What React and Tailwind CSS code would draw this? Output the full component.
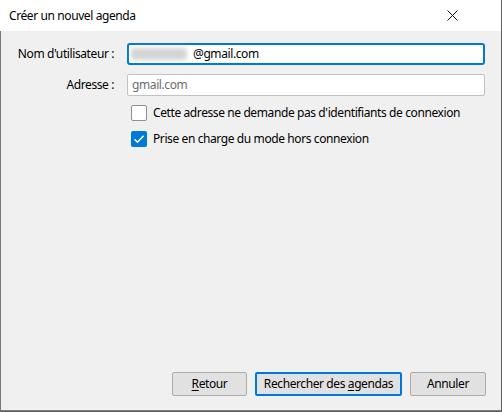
import React from "react";

const FONT = { fontFamily: '"Noto Sans", "Liberation Sans", sans-serif' };

function CloseIcon() {
  return (
    <svg width="11" height="11" viewBox="0 0 11 11" className="block">
      <path d="M0.5 0.5 L10.5 10.5 M10.5 0.5 L0.5 10.5" stroke="#111" strokeWidth="1" fill="none" />
    </svg>
  );
}

function Check() {
  return (
    <svg width="16" height="16" viewBox="0 0 16 16" className="block">
      <path d="M3.5 8.2 L6.5 11.2 L12.6 4.8" stroke="#fff" strokeWidth="1.6" fill="none" />
    </svg>
  );
}

export default function App() {
  return (
    <div className="w-[502px] h-[412px] bg-[#5f5f5f] text-[12px] tracking-[-0.4px] text-black" style={FONT}>
      <div className="w-[501px] h-[411px] flex flex-col bg-[#f0f0f0] border-l border-b border-[#7a7a7a]">
        {/* title bar */}
        <div className="h-[31px] bg-white flex items-center justify-between pl-[9px] pr-[43px] -ml-px">
          <span>Créer un nouvel agenda</span>
          <CloseIcon />
        </div>

        {/* form */}
        <div className="flex-1 flex flex-col pt-[12px] pr-[16px]">
          <div className="flex items-center h-[22px]">
            <span className="w-[114px] text-right pr-px">Nom d'utilisateur :</span>
            <div className="ml-[12px] flex-1 h-[22px] bg-white border-2 border-[#0078d7] rounded-[3px] flex items-center pl-[2px]">
              <span className="w-[56px] h-[12px] bg-[#d4d4d4] blur-[2px] rounded-sm" />
              <span className="ml-[6px]">@gmail.com</span>
            </div>
          </div>

          <div className="flex items-center h-[22px] mt-[9px]">
            <span className="w-[114px] text-right pr-px">Adresse :</span>
            <div className="ml-[12px] flex-1 h-[22px] bg-white border border-[#c2c2c2] rounded-[2px] flex items-center pl-[4px] text-[#6d6d6d]">
              gmail.com
            </div>
          </div>

          <div className="flex flex-col gap-[10px] mt-[9px] ml-[130px]">
            <label className="flex items-center h-[16px]">
              <span className="w-[16px] h-[16px] bg-white border border-[#8f8f8f] rounded-[2px]" />
              <span className="ml-[6px]">Cette adresse ne demande pas d'identifiants de connexion</span>
            </label>
            <label className="flex items-center h-[16px]">
              <span className="w-[16px] h-[16px] bg-[#0078d7] rounded-[2px]">
                <Check />
              </span>
              <span className="ml-[6px]">Prise en charge du mode hors connexion</span>
            </label>
          </div>

          <div className="mt-auto mb-[14px] flex justify-end gap-[8px] -mr-px">
            <button className="w-[75px] h-[24px] bg-[#e1e1e1] border border-[#adadad] rounded-[2px]">
              <span className="underline underline-offset-2">R</span>etour
            </button>
            <button className="w-[147px] h-[24px] bg-[#e1e1e1] border-2 border-[#0078d7] rounded-[2px]">
              Rechercher des <span className="underline underline-offset-2">a</span>gendas
            </button>
            <button className="w-[76px] h-[24px] bg-[#e1e1e1] border border-[#adadad] rounded-[2px]">
              Annuler
            </button>
          </div>
        </div>
      </div>
    </div>
  );
}
